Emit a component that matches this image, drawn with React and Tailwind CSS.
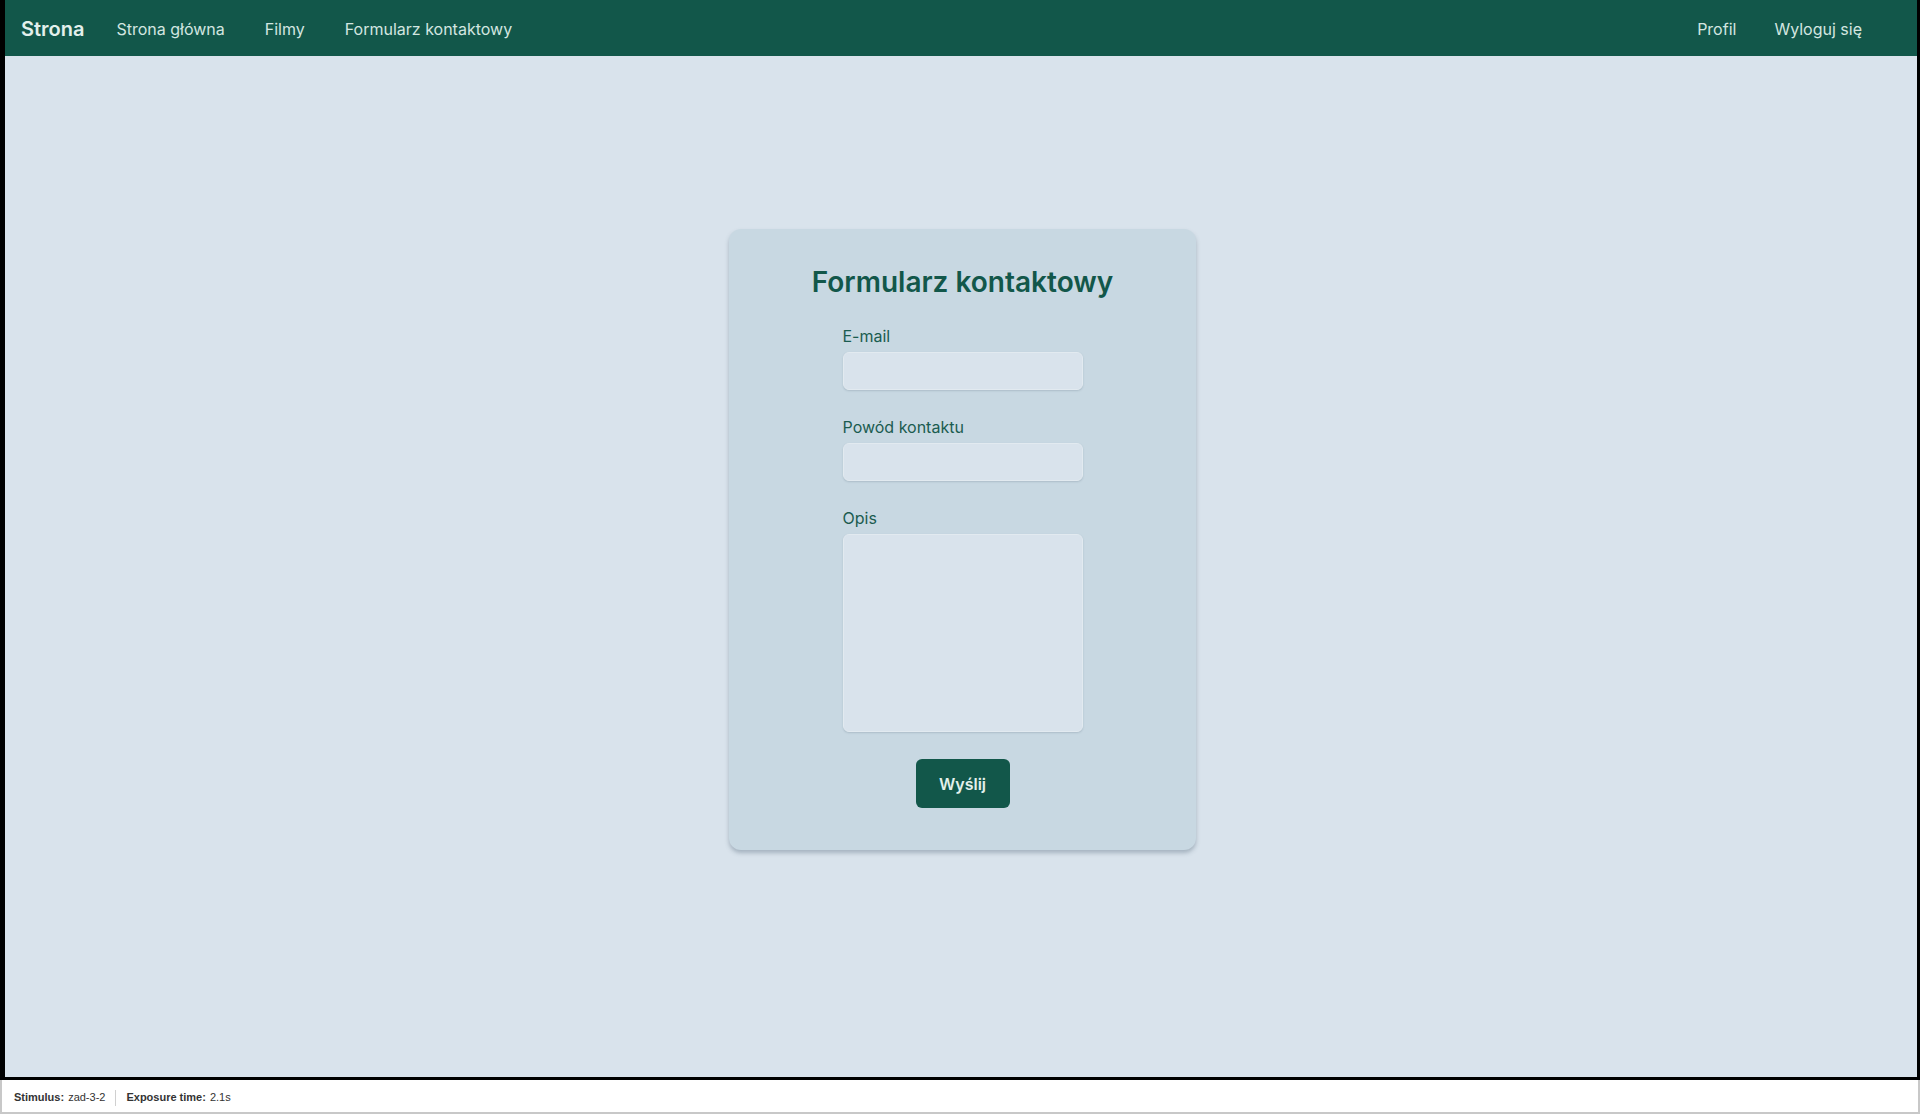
export default function App() {
  return (
    <div className="h-screen flex flex-col bg-white font-['Inter',sans-serif]">
      <div className="flex-1 flex flex-col border-l-[5px] border-r-[3px] border-b-[3px] border-black min-h-0">
        {/* Navbar */}
        <nav className="h-[56px] shrink-0 bg-[#12574a] flex items-center justify-between pl-4 pr-[55px] pt-[2px]">
          <div className="flex items-center">
            <span className="text-[20px] font-semibold text-[#e3f0ec] mr-8">Strona</span>
            <a className="text-[16px] text-[#d3e6e0] mr-10">Strona główna</a>
            <a className="text-[16px] text-[#d3e6e0] mr-10">Filmy</a>
            <a className="text-[16px] text-[#d3e6e0]">Formularz kontaktowy</a>
          </div>
          <div className="flex items-center gap-[38px]">
            <a className="text-[16px] text-[#d3e6e0]">Profil</a>
            <a className="text-[16px] text-[#d3e6e0]">Wyloguj się</a>
          </div>
        </nav>

        {/* Content */}
        <main className="flex-1 bg-[#d9e3ec] flex justify-center pt-[173px] pl-[3px]">
          <div className="w-[467px] h-[621px] bg-[#c8d8e2] rounded-xl shadow-[0_3px_4px_rgba(70,90,110,0.35)] flex flex-col items-center pt-9">
            <h1 className="text-[28px] leading-[34px] font-semibold text-[#12574a]">Formularz kontaktowy</h1>
            <form className="w-[240px] mt-[25px] flex flex-col">
              <label className="text-[16px] leading-6 text-[#1b5c50]">E-mail</label>
              <input className="mt-1 h-[38px] rounded-md bg-[#d9e3ec] border border-[#e2eaf0] shadow-[0_1px_2px_rgba(60,80,100,0.2)] outline-none" />
              <label className="mt-[25px] text-[16px] leading-6 text-[#1b5c50]">Powód kontaktu</label>
              <input className="mt-1 h-[38px] rounded-md bg-[#d9e3ec] border border-[#e2eaf0] shadow-[0_1px_2px_rgba(60,80,100,0.2)] outline-none" />
              <label className="mt-[25px] text-[16px] leading-6 text-[#1b5c50]">Opis</label>
              <textarea className="mt-1 h-[198px] resize-none rounded-md bg-[#d9e3ec] border border-[#e2eaf0] shadow-[0_1px_2px_rgba(60,80,100,0.2)] outline-none" />
              <div className="flex justify-center mt-[27px]">
                <button type="button" className="w-[94px] h-[49px] rounded-md bg-[#12574a] text-[#e3f0ec] text-[16px] font-semibold">
                  Wyślij
                </button>
              </div>
            </form>
          </div>
        </main>
      </div>

      {/* Footer bar */}
      <div className="h-[34px] shrink-0 bg-white border-x-2 border-b-2 border-[#c8c8c8] flex items-center pl-3 pt-[3px] text-[11px] text-[#333] font-['Liberation_Sans',sans-serif]">
        <span className="font-bold">Stimulus:</span>
        <span className="ml-1">zad-3-2</span>
        <span className="mx-[10px] h-4 w-px bg-[#d0d0d0]" />
        <span className="font-bold">Exposure time:</span>
        <span className="ml-1">2.1s</span>
      </div>
    </div>
  )
}
